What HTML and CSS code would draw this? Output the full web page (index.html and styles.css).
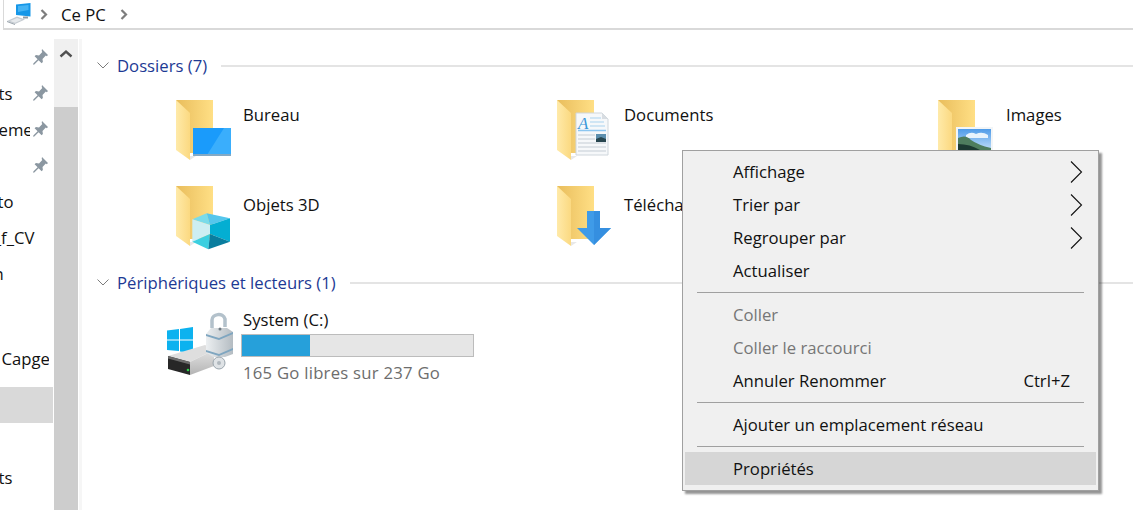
FILE: index.html
```html
<!DOCTYPE html>
<html lang="fr">
<head>
<meta charset="utf-8">
<title>Ce PC</title>
<link rel="stylesheet" href="styles.css">
</head>
<body>
<svg class="defs" width="0" height="0" aria-hidden="true">
  <defs>
    <linearGradient id="fback" x1="0" x2="1" y1="0" y2="0"><stop offset="0" stop-color="#e9bd5c"/><stop offset="1" stop-color="#ffdf85"/></linearGradient>
    <linearGradient id="fflap" x1="0" x2="1" y1="0" y2="0"><stop offset="0" stop-color="#ffeaa9"/><stop offset="1" stop-color="#fbd981"/></linearGradient>
    <linearGradient id="sky" x1="0" x2="0" y1="0" y2="1"><stop offset="0" stop-color="#4f9be8"/><stop offset="1" stop-color="#d5eafc"/></linearGradient>
    <linearGradient id="metal" x1="0" x2="1" y1="0" y2="0"><stop offset="0" stop-color="#eceff1"/><stop offset="1" stop-color="#b4bcc2"/></linearGradient>
    <linearGradient id="dbody" x1="0" x2="0" y1="0" y2="1"><stop offset="0" stop-color="#e2e2e2"/><stop offset="1" stop-color="#b4b4b4"/></linearGradient>
    <g id="folder">
      <path d="M0 2H37V55H14Z" fill="url(#fback)"/>
      <path d="M0 2L14 15V62L0 52Z" fill="url(#fflap)"/>
      <path d="M14 62L20 58H14Z" fill="#e8e8e8"/>
    </g>
    <path id="pin" d="M9 0l6 6-1.200 1.200-1-.6-3.300 3.300.4 3.100-1.300 1.300-3-3-4.300 4.300-1.100.1.100-1.100 4.300-4.300-3-3 1.300-1.300 3.100.4 3.300-3.300-.6-1Z"/>
  </defs>
</svg>

<header class="address">
  <svg class="pc-icon" width="25" height="22" viewBox="0 0 25 22" aria-hidden="true">
    <path d="M9 1.500L23.500 0V13.500L9 12Z" fill="#1697e8"/>
    <path d="M11 3L21.500 2V7L11 9Z" fill="#46b4f4"/>
    <path d="M16 13.500H21V15.500H16Z" fill="#8f9ba5"/>
    <path d="M0 18L10 13.500L18 16.500L8 21Z" fill="#c6ccd2"/>
    <path d="M3 18L10 15L15 16.800L8 19.800Z" fill="#e6e9ec"/>
    <path d="M0 18L8 21V22L0 19Z" fill="#98a2aa"/>
  </svg>
  <svg class="crumb" width="8" height="11" viewBox="0 0 8 11" aria-hidden="true"><path d="M1.500 1L6 5.500L1.500 10" fill="none" stroke="#7d7d7d" stroke-width="2.200"/></svg>
  <span class="crumb-text">Ce PC</span>
  <svg class="crumb" width="8" height="11" viewBox="0 0 8 11" aria-hidden="true"><path d="M1.500 1L6 5.500L1.500 10" fill="none" stroke="#7d7d7d" stroke-width="2.200"/></svg>
</header>

<div class="panes">
  <nav class="nav">
    <div class="nav-row"><span class="nav-label">Bureau</span><svg class="pin" width="16" height="16" viewBox="0 0 16 16" aria-hidden="true"><use href="#pin"/></svg></div>
    <div class="nav-row"><span class="nav-label">Documents</span><svg class="pin" width="16" height="16" viewBox="0 0 16 16" aria-hidden="true"><use href="#pin"/></svg></div>
    <div class="nav-row"><span class="nav-label">Téléchargements</span><svg class="pin" width="16" height="16" viewBox="0 0 16 16" aria-hidden="true"><use href="#pin"/></svg></div>
    <div class="nav-row"><span class="nav-label">Images</span><svg class="pin" width="16" height="16" viewBox="0 0 16 16" aria-hidden="true"><use href="#pin"/></svg></div>
    <div class="nav-row"><span class="nav-label">Projet_Auto</span></div>
    <div class="nav-row"><span class="nav-label">Dossiers._f_CV</span></div>
    <div class="nav-row"><span class="nav-label">Formation</span></div>
    <div class="nav-row nav-cloud"><span class="nav-label">OneDrive - Capgemini</span></div>
    <div class="nav-row nav-selected"><span class="nav-label">Ce PC</span></div>
    <div class="nav-row"><span class="nav-label">Bureau</span></div>
    <div class="nav-row"><span class="nav-label">Documents</span></div>
  </nav>

  <div class="scrollbar">
    <div class="scroll-track">
      <svg width="14" height="9" viewBox="0 0 14 9" aria-hidden="true"><path d="M1.500 7.500L7 2.500L12.500 7.500" fill="none" stroke="#505050" stroke-width="2.400"/></svg>
    </div>
    <div class="scroll-thumb"></div>
  </div>
  <div class="pane-gutter"></div>

  <main class="main">
    <div class="group-head group-first">
      <svg class="group-chevron" width="12" height="7" viewBox="0 0 12 7" aria-hidden="true"><path d="M.5.500L6 6L11.500.500" fill="none" stroke="#7c7c7c" stroke-width="1"/></svg>
      <span class="group-title">Dossiers (7)</span>
      <span class="group-line"></span>
    </div>
    <div class="folders">
      <div class="tile">
        <svg class="tile-icon" width="62" height="64" viewBox="0 0 62 64" aria-hidden="true">
          <use href="#folder"/>
          <path d="M17 30H55V57H17Z" fill="#1a9bfb"/>
          <path d="M31 57L48 30H55V57Z" fill="#3aaefc"/>
          <path d="M17 56H55V58H17Z" fill="#83a9c4"/>
        </svg>
        <span class="tile-name">Bureau</span>
      </div>
      <div class="tile">
        <svg class="tile-icon" width="62" height="64" viewBox="0 0 62 64" aria-hidden="true">
          <use href="#folder"/>
          <path d="M19 15H45L51 21V57H19Z" fill="#f6f8fa" stroke="#cfd6dc" stroke-width="1"/>
          <path d="M45 15V21H51Z" fill="#d8dde2"/>
          <text x="21" y="31" class="doc-glyph">A</text>
          <path d="M33 20H44M33 24H47M33 28H48" stroke="#a9d2ee" stroke-width="1"/>
          <path d="M21 32.500H49" stroke="#8cc6f0" stroke-width="1.500"/>
          <path d="M21 37H38M21 41H38M21 45H49M21 49H49M21 53H49" stroke="#c4ccd4" stroke-width="1"/>
          <path d="M39 36H49V44H39Z" fill="#5d8fae"/>
          <path d="M39 41L44 39L49 41V44H39Z" fill="#28464f"/>
        </svg>
        <span class="tile-name">Documents</span>
      </div>
      <div class="tile">
        <svg class="tile-icon" width="62" height="64" viewBox="0 0 62 64" aria-hidden="true">
          <use href="#folder"/>
          <path d="M18 29H55V58H18Z" fill="#f2f5f7"/>
          <path d="M20 31H53V56H20Z" fill="url(#sky)"/>
          <path d="M28 37Q33 33 38 36Q44 33 50 37V40H28Z" fill="#e8f3fc"/>
          <path d="M20 40Q28 36 33 42Q40 47 53 50V56H20Z" fill="#4e7d5e"/>
          <path d="M20 46Q32 46 42 52L53 53V56H20Z" fill="#1c3a32"/>
        </svg>
        <span class="tile-name tile-name-shift">Images</span>
      </div>
      <div class="tile tile-low">
        <svg class="tile-icon" width="62" height="66" viewBox="0 0 62 66" aria-hidden="true">
          <use href="#folder"/>
          <path d="M16.300 35.300L30.700 29.300L34 41Z" fill="#7adbe9"/>
          <path d="M30.700 29.300L54 34.300L34 41Z" fill="#55c6ec"/>
          <path d="M16.300 35.300L34 41V50L16.300 57.700Z" fill="#cdeef2"/>
          <path d="M34 41L54 34.300V57.700L34 50Z" fill="#04aed2"/>
          <path d="M16.300 57.700L34 50L32.300 65.300Z" fill="#3ccfe0"/>
          <path d="M34 50L54 57.700L32.300 65.300Z" fill="#0a7d9e"/>
        </svg>
        <span class="tile-name">Objets 3D</span>
      </div>
      <div class="tile tile-low">
        <svg class="tile-icon" width="62" height="64" viewBox="0 0 62 64" aria-hidden="true">
          <use href="#folder"/>
          <path d="M30 27H43V44H54L37 61L20 44H30Z" fill="#3f9be8"/>
          <path d="M37 27H43V44H54L37 61Z" fill="#358fe0"/>
        </svg>
        <span class="tile-name">Téléchargements</span>
      </div>
    </div>
    <div class="group-head group-second">
      <svg class="group-chevron" width="12" height="7" viewBox="0 0 12 7" aria-hidden="true"><path d="M.5.500L6 6L11.500.500" fill="none" stroke="#7c7c7c" stroke-width="1"/></svg>
      <span class="group-title">Périphériques et lecteurs (1)</span>
      <span class="group-line"></span>
    </div>
    <div class="drive">
      <svg class="drive-icon" width="70" height="68" viewBox="0 0 70 68" aria-hidden="true">
        <path d="M2 20.500L14 19V29.500H2ZM15 19L28 17V29.500H15ZM2 30.500H14V41L2 40ZM15 30.500H28V43L15 41.500Z" fill="#0cb2ef"/>
        <path d="M3 46L40 35L49 40L25 52Z" fill="#dedede"/>
        <path d="M25 52L49 40V56L25 65Z" fill="url(#dbody)"/>
        <path d="M3 46L25 52V65L3 59Z" fill="#272727"/>
        <path d="M3 46L25 52V54.500L3 48.500Z" fill="#6b6b6b"/>
        <circle cx="23" cy="60" r="1.300" fill="#2fd14a"/>
        <path d="M47 18V10C47 4 58 2 60 9V17" fill="none" stroke="#b3c1cb" stroke-width="3.500"/>
        <path d="M41 24L46 18H62L68 22V44L60 47H48L41 42Z" fill="url(#metal)"/>
        <path d="M41 24L54 28L68 22V24L54 30L41 26Z" fill="#7fa6c0"/>
        <path d="M41 40L54 44L68 38V40L54 46L41 42Z" fill="#7fa6c0"/>
        <circle cx="55" cy="19" r="1.500" fill="#6f7a82"/>
        <circle cx="54" cy="53" r="6" fill="#dfe3e6" stroke="#9aa5ad"/>
        <circle cx="54" cy="53" r="2" fill="#b0b8be"/>
      </svg>
      <div class="drive-info">
        <span class="drive-name">System (C:)</span>
        <div class="usage"><div class="usage-fill"></div></div>
        <span class="drive-free">165 Go libres sur 237 Go</span>
      </div>
    </div>
  </main>
</div>

<div class="menu" role="menu">
  <div class="menu-item"><span>Affichage</span><svg class="submenu" width="13" height="22" viewBox="0 0 13 22" aria-hidden="true"><path d="M1 .500L11.500 11L1 21.500" fill="none" stroke="#111" stroke-width="1.100"/></svg></div>
  <div class="menu-item"><span>Trier par</span><svg class="submenu" width="13" height="22" viewBox="0 0 13 22" aria-hidden="true"><path d="M1 .500L11.500 11L1 21.500" fill="none" stroke="#111" stroke-width="1.100"/></svg></div>
  <div class="menu-item"><span>Regrouper par</span><svg class="submenu" width="13" height="22" viewBox="0 0 13 22" aria-hidden="true"><path d="M1 .500L11.500 11L1 21.500" fill="none" stroke="#111" stroke-width="1.100"/></svg></div>
  <div class="menu-item"><span>Actualiser</span></div>
  <div class="menu-sep"></div>
  <div class="menu-item is-disabled"><span>Coller</span></div>
  <div class="menu-item is-disabled"><span>Coller le raccourci</span></div>
  <div class="menu-item"><span>Annuler Renommer</span><span class="shortcut">Ctrl+Z</span></div>
  <div class="menu-sep"></div>
  <div class="menu-item"><span>Ajouter un emplacement réseau</span></div>
  <div class="menu-sep"></div>
  <div class="menu-item is-hover"><span>Propriétés</span></div>
</div>
</body>
</html>
```
FILE: styles.css
```css
* { box-sizing: border-box; }
html, body { margin: 0; height: 510px; overflow: hidden; background: #fff; }
body { font-family: "Open Sans", "Noto Sans", "Liberation Sans", sans-serif; font-size: 16.700px; color: #111; }
.defs { display: block; height: 0; }

.address { height: 30px; margin-left: 3px; border-left: 1px solid #d9d9d9; border-bottom: 2px solid #d9d9d9; display: flex; align-items: center; padding-left: 3px; }
.pc-icon { margin-right: 8px; margin-top: -1px; }
.crumb { flex: none; }
.crumb-text { margin: 0 14px 0 13px; }

.panes { display: flex; margin-top: 9px; height: 471px; }

.nav { width: 54px; flex: none; overflow: hidden; }
.nav-row { height: 36px; display: flex; align-items: center; }
.nav-label { flex: 1; min-width: 0; margin-left: -77px; overflow: hidden; white-space: nowrap; }
.pin { flex: none; margin: 0 5px 0 3px; fill: #8b97a1; }
.nav-cloud { margin-top: 49px; width: 49px; }
.nav-cloud .nav-label { margin-left: -86px; }
.nav-selected { margin-top: 11px; width: 53px; background: #d9d9d9; }

.scrollbar { width: 24px; flex: none; display: flex; flex-direction: column; margin-right: 1px; }
.scroll-track { height: 68px; background: #f0f0f0; display: flex; justify-content: center; padding-top: 10px; }
.scroll-track svg { display: block; }
.scroll-thumb { flex: 1; background: #cdcdcd; }
.pane-gutter { width: 3px; flex: none; background: #f6f6f6; }

.main { flex: 1; min-width: 0; padding-top: 14px; }
.group-head { display: flex; align-items: center; height: 24px; padding-left: 15px; }
.group-chevron { flex: none; margin-right: 8px; }
.group-title { color: #1d3a94; white-space: nowrap; margin-right: 14px; }
.group-line { flex: 1; height: 2px; background: #e4e4e4; margin-top: 1px; }

.folders { display: grid; grid-template-columns: repeat(3, 381px); grid-auto-rows: 86px; padding: 21px 0 0 94px; }
.tile { display: flex; align-items: flex-start; }
.tile-icon { flex: none; margin-right: 5px; }
.tile-name { white-space: nowrap; line-height: 24px; margin-top: 5px; }
.tile-name-shift { margin-left: 1px; }
.tile-low .tile-name { margin-top: 9px; }
.doc-glyph { font-family: "Liberation Serif", serif; font-style: italic; font-size: 17px; fill: #3b97d8; }

.drive { display: flex; margin: 16px 0 0 83px; }
.drive-icon { flex: none; margin-right: 6px; }
.drive-info { width: 233px; display: flex; flex-direction: column; }
.drive-name { line-height: 22px; margin-left: 2px; margin-top: -1px; }
.drive-free { line-height: 24px; margin-left: 2px; color: #6d6d6d; margin-top: 4px; letter-spacing: .25px; }
.usage { height: 23px; margin-top: 3px; border: 1px solid #bcbcbc; background: #e6e6e6; }
.usage-fill { width: 68px; height: 100%; background: #26a0da; }

.menu { position: absolute; left: 682px; top: 150px; width: 417px; height: 341px; background: #f0f0f0; border: 1px solid #a0a0a0; box-shadow: 3px 3px 2px rgba(0,0,0,.42); padding: 4px 2px; }
.menu-item { height: 33px; display: flex; align-items: center; justify-content: space-between; padding: 0 13px 0 48px; white-space: nowrap; }
.menu-sep { height: 1px; background: #a0a0a0; margin: 5px 12px; }
.is-disabled { color: #767676; }
.is-hover { background: #d6d6d6; }
.shortcut { margin-right: 13px; }
.submenu { flex: none; }
```
